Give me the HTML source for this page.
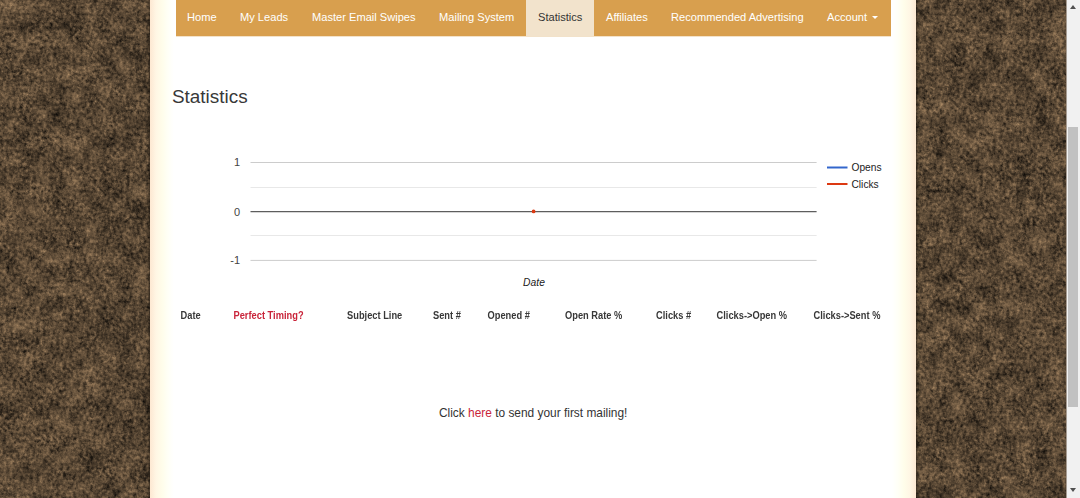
<!DOCTYPE html>
<html><head><meta charset="utf-8">
<style>
*{margin:0;padding:0;box-sizing:border-box}
html,body{width:1080px;height:498px;overflow:hidden}
body{font-family:"Liberation Sans",sans-serif;position:relative;background:#5c4834}
#bg{position:absolute;left:0;top:0;width:1066px;height:498px}
#sb{position:absolute;left:1066px;top:0;width:14px;height:498px;background:#f1f1f1;border-left:1px solid rgba(241,241,241,.5);background-clip:padding-box}
#thumb{position:absolute;left:1068px;top:127px;width:10px;height:280px;background:#c1c1c1}
.arr{position:absolute;left:1070px;width:0;height:0;border-left:3px solid transparent;border-right:3px solid transparent}
#up{top:5px;border-bottom:4px solid #505050}
#dn{top:488px;border-top:4px solid #505050}
#cont{position:absolute;left:150px;top:0;width:766px;height:498px;background:#fff;
  box-shadow:0 0 3px 1px rgba(0,0,0,.5)}
#glowL{position:absolute;left:0;top:0;width:24px;height:498px;background:linear-gradient(to right,#fde8d2 0,#fff6e4 6px,#fffdea 12px,#fffff6 18px,#fff 24px)}
#glowR{position:absolute;right:0;top:0;width:24px;height:498px;background:linear-gradient(to left,#fde8d2 0,#fff6e4 6px,#fffdea 12px,#fffff6 18px,#fff 24px)}
#nav{position:absolute;left:26px;top:0;width:715px;height:36px;background:#d89f4e;box-shadow:0 1px 0 rgba(216,159,78,.3)}
.ni{position:absolute;top:0;height:36px;color:#fff;font-size:11.1px;line-height:34px;white-space:nowrap}
.ni.act{line-height:36px}
.ni.act span{position:relative;top:-1px}
.ni.act{background:#f2e3cc;color:#333;box-shadow:0 1px 0 rgba(242,227,204,.35)}
h1{position:absolute;left:172px;top:85px;font-size:18.9px;font-weight:normal;color:#383838;white-space:nowrap;line-height:24px}
.t{position:absolute;white-space:nowrap}
</style></head><body>
<svg id="bg" width="1066" height="498">
  <filter id="dirt" x="0" y="0" width="100%" height="100%" color-interpolation-filters="sRGB">
    <feTurbulence type="fractalNoise" baseFrequency="0.02" numOctaves="2" seed="11" result="n1"/>
    <feTurbulence type="fractalNoise" baseFrequency="0.06" numOctaves="2" seed="5" result="n2"/>
    <feTurbulence type="fractalNoise" baseFrequency="0.3" numOctaves="4" seed="3" result="n3"/>
    <feComposite in="n1" in2="n2" operator="arithmetic" k1="0" k2="0.222" k3="0.778" k4="0" result="m12"/>
    <feComposite in="m12" in2="n3" operator="arithmetic" k1="0" k2="0.450" k3="0.550" k4="0" result="mix"/>
    <feColorMatrix in="mix" type="matrix" values="0.950 0 0 0 -0.130  0.766 0 0 0 -0.105  0.561 0 0 0 -0.077  0 0 0 0 1"/>
  </filter>
  <rect width="1066" height="498" fill="#5c4834" filter="url(#dirt)"/>
</svg>
<div id="sb"></div><div id="thumb"></div><div id="up" class="arr"></div><div id="dn" class="arr"></div>
<div id="cont">
  <div id="glowL"></div><div id="glowR"></div>
  <div id="nav"></div>
</div>
<div class="ni" style="left:187px">Home</div>
<div class="ni" style="left:240px">My Leads</div>
<div class="ni" style="left:312px">Master Email Swipes</div>
<div class="ni" style="left:439px">Mailing System</div>
<div class="ni act" style="left:526px;width:68px;padding-left:12px"><span>Statistics</span></div>
<div class="ni" style="left:606px">Affiliates</div>
<div class="ni" style="left:671px">Recommended Advertising</div>
<div class="ni" style="left:827px">Account <span style="display:inline-block;width:0;height:0;border-left:3.5px solid transparent;border-right:3.5px solid transparent;border-top:3.5px solid #fff;vertical-align:middle;margin-left:2px;position:relative;top:-1px"></span></div>
<h1>Statistics</h1>

<svg class="t" style="left:0;top:0" width="1066" height="498">
  <g stroke-width="1">
    <line x1="250.5" y1="162.5" x2="816.6" y2="162.5" stroke="#cccccc"/>
    <line x1="250.5" y1="187.5" x2="816.6" y2="187.5" stroke="#e8e8e8"/>
    <line x1="250.5" y1="235.5" x2="816.6" y2="235.5" stroke="#e8e8e8"/>
    <line x1="250.5" y1="260.4" x2="816.6" y2="260.4" stroke="#cccccc"/>
    <line x1="250.5" y1="211.6" x2="816.6" y2="211.6" stroke="#5e5e5e" stroke-width="1.3"/>
  </g>
  <circle cx="533.6" cy="211.4" r="1.9" fill="#dc3912"/>
  <g font-family="Liberation Sans" font-size="11" fill="#444" text-anchor="end">
    <text x="240" y="166">1</text>
    <text x="240" y="215.5">0</text>
    <text x="240" y="264">-1</text>
  </g>
  <text x="534" y="286" font-family="Liberation Sans" font-size="10.3" font-style="italic" fill="#222" text-anchor="middle">Date</text>
  <line x1="827" y1="167.5" x2="847.5" y2="167.5" stroke="#3366cc" stroke-width="2"/>
  <line x1="827" y1="184" x2="847.5" y2="184" stroke="#dc3912" stroke-width="2"/>
  <g font-family="Liberation Sans" font-size="10.2" fill="#222">
    <text x="851.5" y="171">Opens</text>
    <text x="851.5" y="187.5">Clicks</text>
  </g>
</svg>

<div class="t" style="top:310px;left:0;width:1000px;height:12px;font-size:9.3px;font-weight:bold;color:#383838;line-height:12px;transform:scaleY(1.08);transform-origin:0 9px">
  <span class="t" style="left:180.5px">Date</span>
  <span class="t" style="left:233.5px;color:#c9243a">Perfect Timing?</span>
  <span class="t" style="left:347px">Subject Line</span>
  <span class="t" style="left:433px">Sent #</span>
  <span class="t" style="left:487.5px">Opened #</span>
  <span class="t" style="left:565px">Open Rate %</span>
  <span class="t" style="left:656px">Clicks #</span>
  <span class="t" style="left:716.5px">Clicks-&gt;Open %</span>
  <span class="t" style="left:813.5px">Clicks-&gt;Sent %</span>
</div>

<div class="t" style="left:439px;top:405px;font-size:11.9px;color:#333;line-height:16px">Click <span style="color:#c9243a">here</span> to send your first mailing!</div>
</body></html>
